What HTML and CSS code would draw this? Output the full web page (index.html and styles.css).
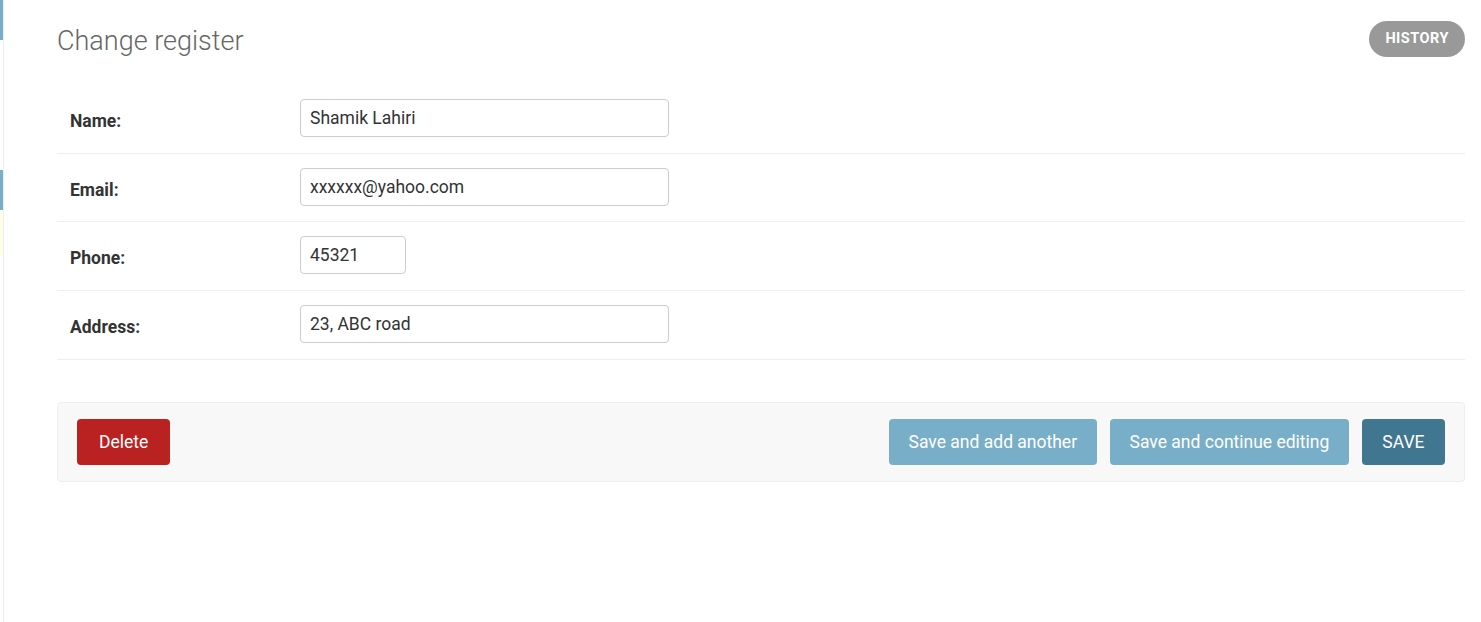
FILE: index.html
```html
<!DOCTYPE html>
<html lang="en">
<head>
    <meta charset="UTF-8">
    <meta name="viewport" content="width=device-width, initial-scale=1.0">
    <title>Change register</title>

    <link rel="stylesheet" href="styles.css">
</head>
<body>
    <div class="sidebar">
        <span class="nav-item nav-active"></span>
        <span class="nav-gap"></span>
        <span class="nav-item nav-active"></span>
        <span class="nav-item nav-current"></span>
    </div>

    <div class="content">
        <div class="content-header">
            <h1>Change register</h1>
            <a href="#" class="historylink">History</a>
        </div>

        <form action="#" method="POST" class="change-form">
            <div class="form-row">
                <label for="id_name">Name:</label>
                <input type="text" id="id_name" name="name" value="Shamik Lahiri" class="vTextField">
            </div>
            <div class="form-row">
                <label for="id_email">Email:</label>
                <input type="text" id="id_email" name="email" value="xxxxxx@yahoo.com" class="vTextField">
            </div>
            <div class="form-row">
                <label for="id_phone">Phone:</label>
                <input type="text" id="id_phone" name="phone" value="45321" class="vIntegerField">
            </div>
            <div class="form-row">
                <label for="id_address">Address:</label>
                <input type="text" id="id_address" name="address" value="23, ABC road" class="vTextField">
            </div>

            <div class="submit-row">
                <a href="#" class="deletelink">Delete</a>
                <div class="submit-actions">
                    <input type="submit" value="Save and add another" name="_addanother">
                    <input type="submit" value="Save and continue editing" name="_continue">
                    <input type="submit" value="SAVE" class="default" name="_save">
                </div>
            </div>
        </form>
    </div>
</body>
</html>
```

FILE: styles.css
```css
:root{
    --cor-primaria: #79aec8;
    --cor-escura: #417690;
    --cor-borda: #eeeeee;
    --cor-delete: #ba2121;
}

body{
    margin: 0;
    display: flex;
    min-height: 100vh;
    font-family: Roboto, "Liberation Sans", sans-serif;
    color: #333;
    background-color: #fff;
}

/* barra lateral recolhida */
.sidebar{
    width: 3px;
    border-right: 1px solid #ececec;
    display: flex;
    flex-direction: column;
    flex-shrink: 0;
}

.nav-item{
    display: block;
    height: 40px;
}

.nav-gap{
    display: block;
    height: 130px;
}

.nav-active{
    background-color: var(--cor-primaria);
}

.nav-current{
    height: 45px;
    background-color: #ffffe6;
}

.content{
    flex: 1;
    padding: 21px 16px 0 53px;
}

.content-header{
    display: flex;
    justify-content: space-between;
    align-items: center;
    height: 36px;
}

.content-header h1{
    margin: 0;
    font-size: 27px;
    font-weight: 300;
    color: #666;
    position: relative;
    top: 2px;
}

.historylink{
    display: block;
    height: 36px;
    line-height: 36px;
    padding: 0 16px;
    border-radius: 18px;
    background-color: #999;
    color: #fff;
    font-size: 14.5px;
    font-weight: bold;
    text-transform: uppercase;
    letter-spacing: 0.5px;
    text-decoration: none;
}

.change-form{
    margin-top: 28px;
}

.form-row{
    display: flex;
    align-items: center;
    padding: 14px 13px 15.7px;
    border-bottom: 1px solid var(--cor-borda);
}

.form-row label{
    width: 230px;
    padding-top: 6px;
    font-size: 17.5px;
    font-weight: bold;
    color: #333;
}

.form-row input{
    box-sizing: border-box;
    height: 38px;
    padding: 0 9px;
    border: 1px solid #ccc;
    border-radius: 4px;
    font-family: inherit;
    font-size: 17.5px;
    color: #333;
}

.vTextField{
    width: 369px;
}

.vIntegerField{
    width: 106px;
}

.submit-row{
    margin-top: 42px;
    display: flex;
    justify-content: space-between;
    align-items: center;
    padding: 16px 19px;
    background-color: #f8f8f8;
    border: 1px solid var(--cor-borda);
    border-radius: 4px;
}

.submit-actions{
    display: flex;
    gap: 12.5px;
}

.deletelink,
.submit-actions input{
    box-sizing: border-box;
    height: 46px;
    line-height: 46px;
    padding: 0 20px;
    border: none;
    border-radius: 4px;
    font-family: inherit;
    font-size: 17.5px;
    color: #fff;
    cursor: pointer;
}

.deletelink{
    display: block;
    padding: 0 22px;
    background-color: var(--cor-delete);
    text-decoration: none;
}

.submit-actions input{
    background-color: var(--cor-primaria);
}

.submit-actions input.default{
    background-color: var(--cor-escura);
    padding: 0 20.5px;
}
```
